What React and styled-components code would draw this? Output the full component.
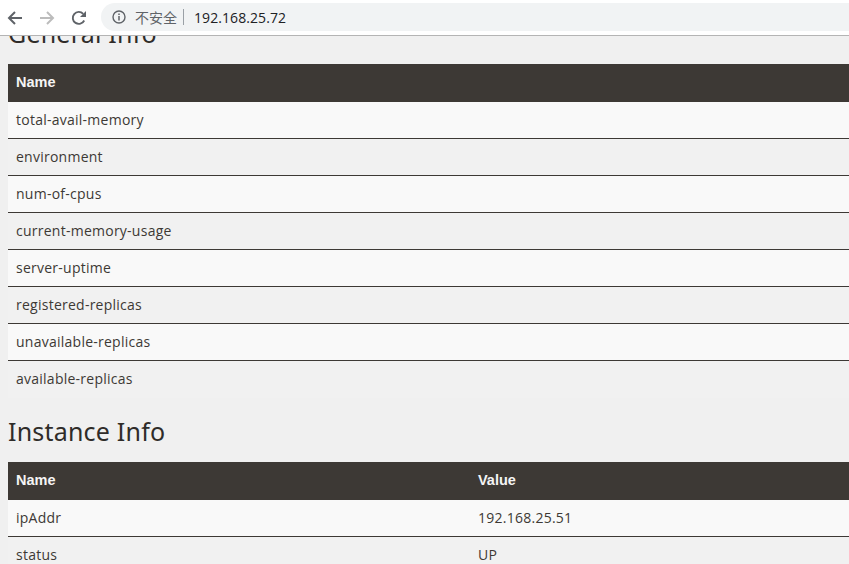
import React from "react";
import styled, { createGlobalStyle } from "styled-components";

const Global = createGlobalStyle`
  html, body { margin: 0; padding: 0; height: 100%; overflow: hidden; background: #f0f0f0; }
  #root { height: 100%; }
`;

const Page = styled.div`
  width: 849px;
  height: 564px;
  display: flex;
  flex-direction: column;
  overflow: hidden;
`;

const Toolbar = styled.header`
  flex: none;
  height: 35px;
  box-sizing: content-box;
  background: #ffffff;
  border-bottom: 1px solid #b4b4b4;
  display: flex;
  align-items: center;
  gap: 2px;
`;

const NavButton = styled.span`
  width: 30px;
  height: 24px;
  display: flex;
  align-items: center;
  justify-content: center;
  flex: none;
`;

const Omnibox = styled.div`
  flex: 1;
  height: 28px;
  margin-left: 5px;
  margin-top: -1px;
  background: #f1f3f4;
  border-radius: 14px 0 0 14px;
  display: flex;
  align-items: center;
  padding-left: 11px;
  font-family: "Noto Sans CJK SC", "Liberation Sans", sans-serif;
`;

const Security = styled.span`
  font-size: 14px;
  color: #5f6368;
  margin-left: 9px;
  padding-right: 6px;
  border-right: 1px solid #9aa0a6;
  line-height: 16px;
  height: 16px;
  display: inline-flex;
  align-items: center;
`;

const Url = styled.span`
  font-family: "Open Sans", "Liberation Sans", sans-serif;
  font-size: 14px;
  letter-spacing: 0.08px;
  color: #202124;
  margin-left: 10px;
`;

const Content = styled.main`
  flex: 1;
  overflow: hidden;
  padding: 0 0 0 8px;
  font-family: "Open Sans", "Noto Sans", sans-serif;
  color: #3d3935;
`;

const Heading = styled.h2`
  margin: ${(p) => p.$margin};
  font-size: 25px;
  line-height: 32px;
  font-weight: 400;
  color: #2f2c29;
  font-family: "Noto Sans", sans-serif;
  letter-spacing: 0.2px;
`;

const Table = styled.div`
  width: 841px;
  font-size: 14px;
  letter-spacing: 0.25px;
`;

const HeadRow = styled.div`
  display: grid;
  grid-template-columns: 462px 1fr;
  height: 36px;
  padding-bottom: 2px;
  align-items: center;
  background: #3d3935;
  color: #f4f4f4;
  font-family: "Liberation Sans", sans-serif;
  font-size: 14.5px;
  letter-spacing: 0;
  font-weight: 700;
`;

const Row = styled.div`
  display: grid;
  grid-template-columns: 462px 1fr;
  height: 34px;
  padding-bottom: 2px;
  align-items: center;
  background: ${(p) => (p.$odd ? "#f9f9f9" : "#f1f1f1")};
  border-bottom: 1px solid ${(p) => (p.$last ? "transparent" : "#3d3935")};
`;

const Cell = styled.span`
  padding-left: 8px;
  white-space: nowrap;
`;

const Back = ({ color }) => (
  <svg width="16" height="16" viewBox="0 0 16 16" fill="none" stroke={color} strokeWidth="2">
    <path d="M15 8H2M8 2L2 8l6 6" />
  </svg>
);
const Forward = ({ color }) => (
  <svg width="16" height="16" viewBox="0 0 16 16" fill="none" stroke={color} strokeWidth="2">
    <path d="M1 8h13M8 2l6 6-6 6" />
  </svg>
);
const Reload = () => (
  <svg width="16" height="16" viewBox="0 0 16 16" fill="none">
    <path d="M13.2 10.5A6 6 0 1 1 12.2 3.8" stroke="#5f6368" strokeWidth="1.9" />
    <path d="M15 1v6H9z" fill="#5f6368" />
  </svg>
);
const Info = () => (
  <svg width="14" height="14" viewBox="0 0 14 14" fill="none">
    <circle cx="7" cy="7" r="6" stroke="#5f6368" strokeWidth="1.4" />
    <path d="M7 6v4.4" stroke="#5f6368" strokeWidth="1.5" />
    <path d="M7 3.4v1.5" stroke="#5f6368" strokeWidth="1.5" />
  </svg>
);

const general = [
  "total-avail-memory",
  "environment",
  "num-of-cpus",
  "current-memory-usage",
  "server-uptime",
  "registered-replicas",
  "unavailable-replicas",
  "available-replicas",
];

const instance = [
  ["ipAddr", "192.168.25.51"],
  ["status", "UP"],
];

export default function App() {
  return (
    <Page>
      <Global />
      <Toolbar>
        <NavButton><Back color="#5f6368" /></NavButton>
        <NavButton><Forward color="#bcbcbc" /></NavButton>
        <NavButton><Reload /></NavButton>
        <Omnibox>
          <Info />
          <Security>不安全</Security>
          <Url>192.168.25.72</Url>
        </Omnibox>
      </Toolbar>
      <Content>
        <Heading $margin="-19px 0 15px">General Info</Heading>
        <Table>
          <HeadRow><Cell>Name</Cell></HeadRow>
          {general.map((name, i) => (
            <Row key={name} $odd={i % 2 === 0} $last={i === general.length - 1}>
              <Cell>{name}</Cell>
            </Row>
          ))}
        </Table>
        <Heading $margin="17px 0 15px">Instance Info</Heading>
        <Table>
          <HeadRow><Cell>Name</Cell><Cell>Value</Cell></HeadRow>
          {instance.map(([k, v], i) => (
            <Row key={k} $odd={i % 2 === 0}>
              <Cell>{k}</Cell>
              <Cell>{v}</Cell>
            </Row>
          ))}
        </Table>
      </Content>
    </Page>
  );
}
